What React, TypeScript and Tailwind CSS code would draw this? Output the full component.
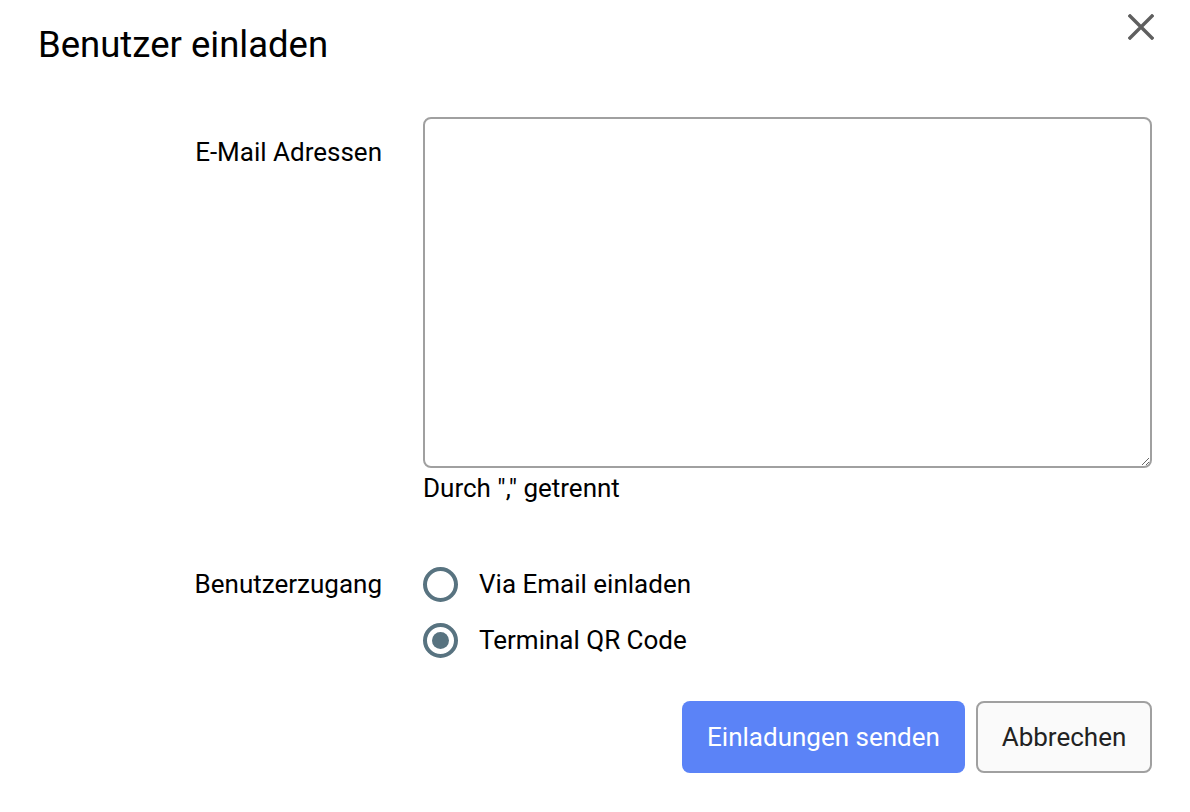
function CloseIcon() {
  return (
    <svg width="26" height="26" viewBox="0 0 26 26" className="block">
      <path d="M2 2 L24 24 M24 2 L2 24" stroke="#5f5f5f" strokeWidth="3.4" strokeLinecap="square" fill="none" />
    </svg>
  );
}

export default function App() {
  return (
    <div className="min-h-[812px] w-full bg-white px-[38px] text-black" style={{ fontFamily: 'Roboto, "Liberation Sans", sans-serif' }}>
      {/* Header */}
      <div className="flex items-start justify-between pt-[22px]">
        <h1 className="text-[36.5px] leading-[46px] font-normal">Benutzer einladen</h1>
        <button className="-mt-[8px] -mr-[2px]">
          <CloseIcon />
        </button>
      </div>

      {/* Form */}
      <div className="mt-[49px] grid grid-cols-[344px_1fr] gap-x-[41px]">
        <label className="pt-[20px] text-right text-[26px] leading-[30px]">E-Mail Adressen</label>
        <div>
          <textarea className="block h-[351px] w-full resize-y rounded-[8px] border-2 border-[#a0a0a0] p-3 text-[22px] outline-none" />
          <p className="mt-[4px] text-[26px] leading-[32px]">Durch "," getrennt</p>
        </div>

        <label className="mt-[62px] text-right text-[26px] leading-[36px]">Benutzerzugang</label>
        <div className="mt-[62px] flex flex-col gap-[20px]">
          <Radio label="Via Email einladen" />
          <Radio label="Terminal QR Code" checked />
        </div>
      </div>

      {/* Actions */}
      <div className="mt-[43px] flex justify-end gap-[11px]">
        <button className="h-[72px] w-[283px] rounded-[8px] bg-[#5b83f7] text-[26px] text-white">Einladungen senden</button>
        <button className="h-[72px] w-[176px] rounded-[8px] border-2 border-[#a0a0a0] bg-[#fafafa] text-[26px] text-[#222]">Abbrechen</button>
      </div>
    </div>
  );
}

function Radio({ label, checked }: { label: string; checked?: boolean }) {
  return (
    <div className="flex h-[36px] items-center gap-[21px]">
      <span className="flex h-[35px] w-[35px] items-center justify-center rounded-full border-[4px] border-[#587380]">
        {checked && <span className="h-[17px] w-[17px] rounded-full bg-[#587380]" />}
      </span>
      <span className="text-[26px]">{label}</span>
    </div>
  );
}
